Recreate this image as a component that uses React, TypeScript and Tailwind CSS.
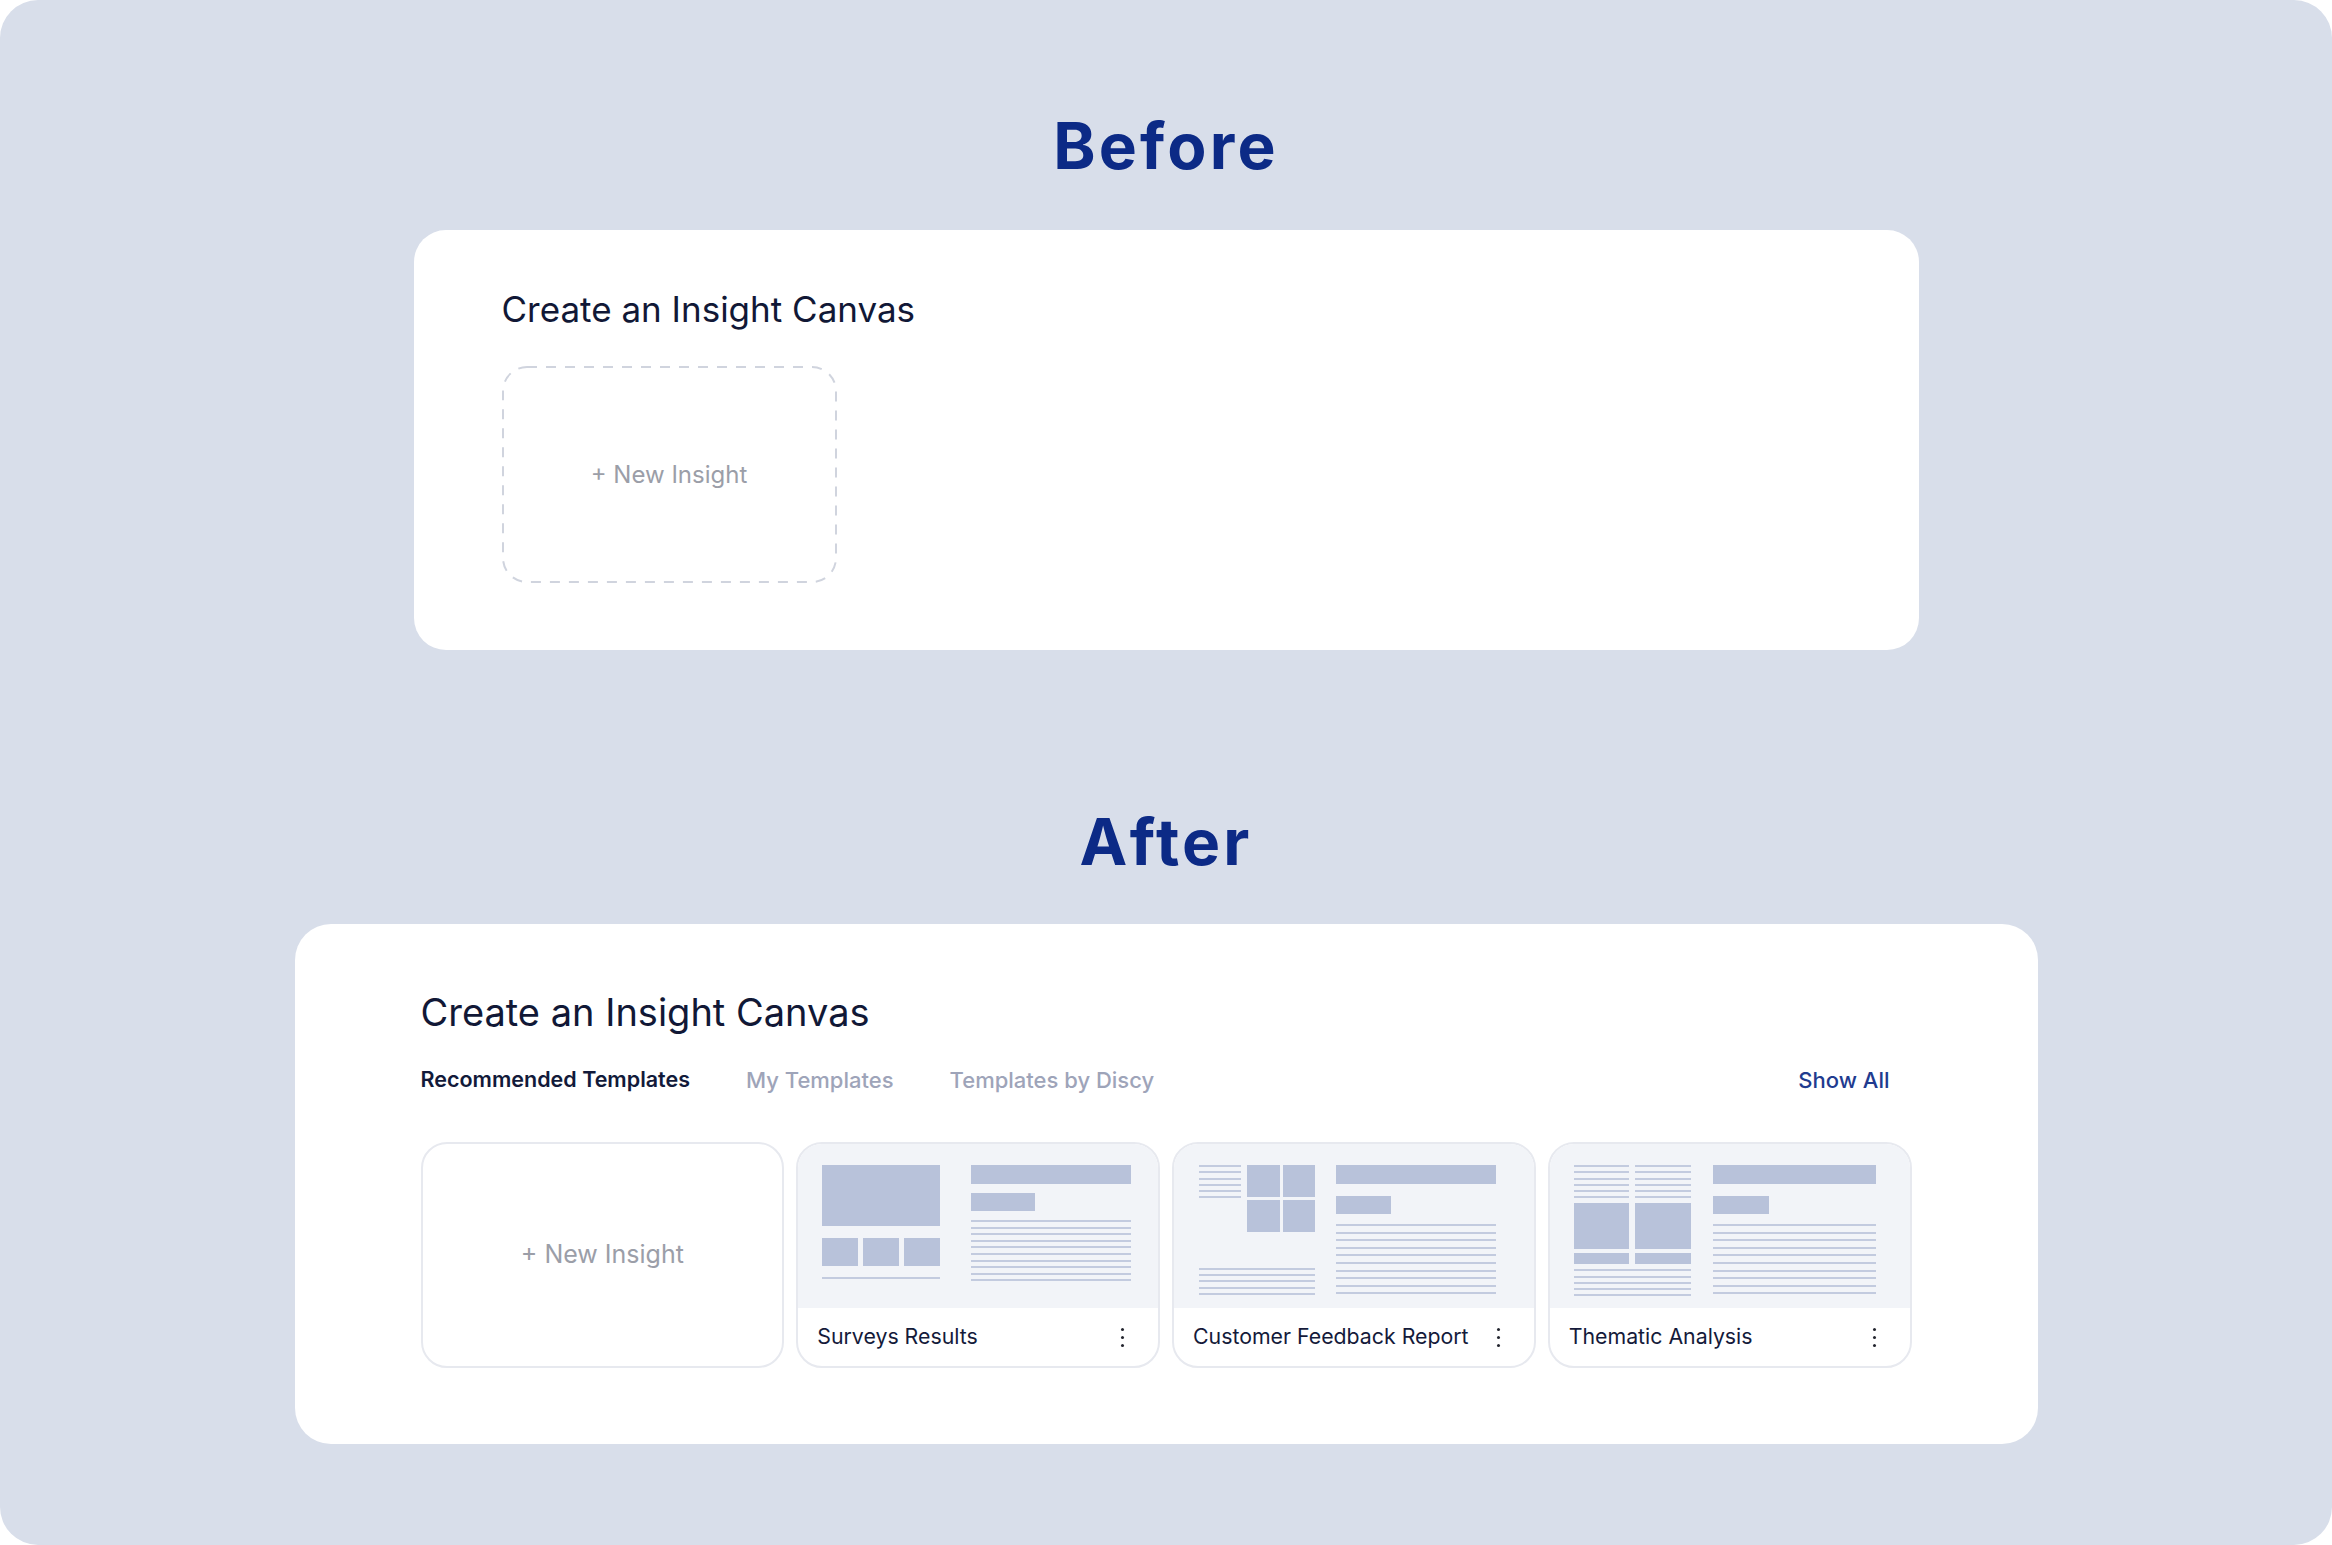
import React from "react";

const block = "bg-[#b8c2da]";
const line = "h-[2px] bg-[#c3cbdf]";

function Lines({ count, width, gap }: { count: number; width: string; gap: string }) {
  return (
    <div className={`flex flex-col ${width} ${gap}`}>
      {Array.from({ length: count }).map((_, i) => (
        <div key={i} className={line} />
      ))}
    </div>
  );
}

function TextColumn({ width, lines, lineGap, subWidth, subGap, afterSub }: {
  width: string;
  lines: number;
  lineGap: string;
  subWidth: string;
  subGap: string;
  afterSub: string;
}) {
  return (
    <div className={`flex flex-col ${width}`}>
      <div className={`h-[19px] ${block}`} />
      <div className={`h-[18px] ${subWidth} ${subGap} ${block}`} />
      <div className={afterSub}>
        <Lines count={lines} width="w-full" gap={lineGap} />
      </div>
    </div>
  );
}

function SurveysPreview() {
  return (
    <div className="flex gap-[31px] pl-[24px] pt-[21px]">
      <div className="flex w-[118px] flex-col">
        <div className={`h-[61px] ${block}`} />
        <div className="mt-[12px] flex gap-[5px]">
          <div className={`h-[28px] flex-1 ${block}`} />
          <div className={`h-[28px] flex-1 ${block}`} />
          <div className={`h-[28px] flex-1 ${block}`} />
        </div>
        <div className={`mt-[11px] ${line}`} />
      </div>
      <TextColumn width="w-[160px]" lines={10} lineGap="gap-[4.6px]" subWidth="w-[64px]" subGap="mt-[9px]" afterSub="mt-[9px]" />
    </div>
  );
}

function FeedbackPreview() {
  return (
    <div className="flex gap-[21px] pl-[25px] pt-[21px]">
      <div className="flex w-[116px] flex-col">
        <div className="flex gap-[6px]">
          <Lines count={6} width="w-[42px]" gap="gap-[4.3px]" />
          <div className="grid w-[68px] grid-cols-2 gap-[3px]">
            <div className={`h-[32px] ${block}`} />
            <div className={`h-[32px] ${block}`} />
            <div className={`h-[32px] ${block}`} />
            <div className={`h-[32px] ${block}`} />
          </div>
        </div>
        <div className="mt-[36px]">
          <Lines count={5} width="w-full" gap="gap-[4.2px]" />
        </div>
      </div>
      <TextColumn width="w-[160px]" lines={10} lineGap="gap-[5.6px]" subWidth="w-[55px]" subGap="mt-[12px]" afterSub="mt-[10px]" />
    </div>
  );
}

function ThematicPreview() {
  return (
    <div className="flex gap-[22px] pl-[24px] pt-[21px]">
      <div className="flex w-[117px] flex-col">
        <div className="flex gap-[6px]">
          <Lines count={6} width="flex-1" gap="gap-[4.3px]" />
          <Lines count={6} width="flex-1" gap="gap-[4.3px]" />
        </div>
        <div className="mt-[5px] flex gap-[6px]">
          <div className={`h-[46px] flex-1 ${block}`} />
          <div className={`h-[46px] flex-1 ${block}`} />
        </div>
        <div className="mt-[4px] flex gap-[6px]">
          <div className={`h-[11px] flex-1 ${block}`} />
          <div className={`h-[11px] flex-1 ${block}`} />
        </div>
        <div className="mt-[5px]">
          <Lines count={5} width="w-full" gap="gap-[4.2px]" />
        </div>
      </div>
      <TextColumn width="w-[163px]" lines={10} lineGap="gap-[5.6px]" subWidth="w-[56px]" subGap="mt-[12px]" afterSub="mt-[10px]" />
    </div>
  );
}

function Kebab() {
  return (
    <div className="flex flex-col gap-[5px]">
      <span className="h-[3px] w-[3px] rounded-full bg-[#23252e]" />
      <span className="h-[3px] w-[3px] rounded-full bg-[#23252e]" />
      <span className="h-[3px] w-[3px] rounded-full bg-[#23252e]" />
    </div>
  );
}

function TemplateCard({ title, children }: { title: string; children: React.ReactNode }) {
  return (
    <div className="flex h-[226px] flex-col overflow-hidden rounded-[26px] border-2 border-[#e7e9ef] bg-white">
      <div className="h-[164px] bg-[#f2f4f8]">{children}</div>
      <div className="flex flex-1 items-center justify-between pl-[19px] pr-[34px]">
        <span className="text-[21.3px] text-[#141a3a]">{title}</span>
        <Kebab />
      </div>
    </div>
  );
}

function DashedBox() {
  return (
    <div className="relative mt-[39px] flex h-[217px] w-[335px] items-center justify-center">
      <svg className="absolute inset-0 h-full w-full" viewBox="0 0 335 217" fill="none">
        <rect x="1" y="1" width="333" height="215" rx="24" stroke="#d0d4de" strokeWidth="2" strokeDasharray="10 9" />
      </svg>
      <span className="text-[24px] text-[#9b9ea8]">+ New Insight</span>
    </div>
  );
}

export default function App() {
  return (
    <div className="h-[1545px] w-[2332px] bg-white font-['Inter',sans-serif]">
      <div className="flex h-full flex-col items-center rounded-[38px] bg-[#d8deea] pt-[114px]">
        <h1 className="text-[64px] font-bold leading-none tracking-[0.05em] text-[#0c2a86]">Before</h1>

        <section className="mt-[52px] w-[1505px] rounded-[32px] bg-white pl-[88px] pt-[62px] pb-[67px]">
          <h2 className="text-[35px] leading-none text-[#111836]">Create an Insight Canvas</h2>
          <DashedBox />
        </section>

        <h1 className="mt-[160px] text-[64px] font-bold leading-none tracking-[0.05em] text-[#0c2a86]">After</h1>

        <section className="mt-[50px] w-[1743px] rounded-[36px] bg-white px-[126px] pt-[69px] pb-[76px]">
          <h2 className="text-[38px] leading-none text-[#111836]">Create an Insight Canvas</h2>

          <div className="mt-[38px] flex h-[22px] items-center pr-[22px] leading-none">
            <span className="text-[21.5px] font-semibold text-[#121a3a]">Recommended Templates</span>
            <span className="ml-[56px] text-[22px] font-medium text-[#9ea4b9]">My Templates</span>
            <span className="ml-[56px] text-[22px] font-medium text-[#9ea4b9]">Templates by Discy</span>
            <span className="ml-auto text-[22px] font-medium text-[#213b8f]">Show All</span>
          </div>

          <div className="mt-[51px] grid grid-cols-4 gap-[12px]">
            <div className="flex h-[226px] items-center justify-center rounded-[26px] border-2 border-[#e7e9ef] bg-white">
              <span className="text-[25px] text-[#9b9ea8]">+ New Insight</span>
            </div>
            <TemplateCard title="Surveys Results">
              <SurveysPreview />
            </TemplateCard>
            <TemplateCard title="Customer Feedback Report">
              <FeedbackPreview />
            </TemplateCard>
            <TemplateCard title="Thematic Analysis">
              <ThematicPreview />
            </TemplateCard>
          </div>
        </section>
      </div>
    </div>
  );
}
